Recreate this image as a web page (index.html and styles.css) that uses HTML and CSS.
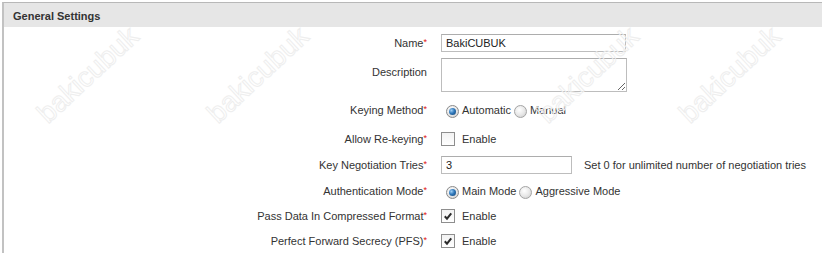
FILE: index.html
```html
<!DOCTYPE html>
<html>
<head>
<meta charset="utf-8">
<link rel="stylesheet" href="styles.css">
</head>
<body>
<div class="panel">
  <div class="head">General Settings</div>
  <div class="form">
    <div class="row r1">
      <div class="lbl">Name<span class="req">*</span></div>
      <div class="ctl"><input class="txt wide" type="text" value="BakiCUBUK"></div>
    </div>
    <div class="row r2">
      <div class="lbl lbl-up">Description</div>
      <div class="ctl"><textarea class="area"></textarea></div>
    </div>
    <div class="row r3">
      <div class="lbl">Keying Method<span class="req">*</span></div>
      <div class="ctl"><span class="rad on"></span><span class="opt">Automatic</span><span class="rad rad2"></span><span class="opt">Manual</span></div>
    </div>
    <div class="row r4">
      <div class="lbl">Allow Re-keying<span class="req">*</span></div>
      <div class="ctl"><span class="cb"></span><span class="opt cbt">Enable</span></div>
    </div>
    <div class="row r5">
      <div class="lbl">Key Negotiation Tries<span class="req">*</span></div>
      <div class="ctl"><input class="txt narrow" type="text" value="3"><span class="hint">Set 0 for unlimited number of negotiation tries</span></div>
    </div>
    <div class="row r6">
      <div class="lbl">Authentication Mode<span class="req">*</span></div>
      <div class="ctl"><span class="rad on"></span><span class="opt">Main Mode</span><span class="rad rad2"></span><span class="opt">Aggressive Mode</span></div>
    </div>
    <div class="row r7">
      <div class="lbl">Pass Data In Compressed Format<span class="req">*</span></div>
      <div class="ctl"><span class="cb"><svg viewBox="0 0 13 13" width="13" height="13"><path d="M3 6.2 L5.4 8.8 L10 3.2" fill="none" stroke="#2b2b2b" stroke-width="2.2"/></svg></span><span class="opt cbt">Enable</span></div>
    </div>
    <div class="row r8">
      <div class="lbl">Perfect Forward Secrecy (PFS)<span class="req">*</span></div>
      <div class="ctl"><span class="cb"><svg viewBox="0 0 13 13" width="13" height="13"><path d="M3 6.2 L5.4 8.8 L10 3.2" fill="none" stroke="#2b2b2b" stroke-width="2.2"/></svg></span><span class="opt cbt">Enable</span></div>
    </div>
  </div>
</div>
<div class="wm-layer">
  <span class="wm wa1">bakicubuk</span>
  <span class="wm wa2">bakicubuk</span>
  <span class="wm wa3">bakicubuk</span>
  <span class="wm wa4">bakicubuk</span>
</div>
</body>
</html>
```
FILE: styles.css
```css
html, body {
  margin: 0;
  padding: 0;
  background: #fff;
}
body {
  position: relative;
  width: 822px;
  height: 260px;
  overflow: hidden;
  font-family: "Liberation Sans", Arial, sans-serif;
  font-size: 11px;
  color: #333;
}
.panel {
  margin: 2px 0 0 2px;
  border-top: 1px solid #b8b8b8;
  border-left: 2px solid #c2c2c2;
}
.head {
  height: 21px;
  padding: 3px 0 0 9px;
  line-height: 21px;
  background: #e6e6e6;
  font-weight: bold;
  font-size: 11px;
  color: #333;
}
.form {
  display: flex;
  flex-direction: column;
}
.row {
  display: flex;
  align-items: center;
}
.r1 { height: 31px; }
.r2 { height: 34px; }
.r3 { height: 36px; }
.r4 { height: 22px; }
.r5 { height: 29px; }
.r6 { height: 24px; }
.r7 { height: 26px; }
.r8 { height: 24px; }
.lbl {
  flex: none;
  width: 423px;
  text-align: right;
  white-space: nowrap;
}
.lbl-up {
  margin-bottom: 6px;
}
.req {
  color: #e01010;
  font-size: 9px;
  vertical-align: 2px;
}
.ctl {
  margin-left: 14px;
  display: flex;
  align-items: center;
  white-space: nowrap;
}
.txt {
  box-sizing: border-box;
  height: 18px;
  margin: 0;
  padding: 0 4px;
  border: 1px solid #bdbdbd;
  border-top-color: #adadad;
  font-family: "Liberation Sans", Arial, sans-serif;
  font-size: 11px;
  color: #222;
  background: #fff;
  outline: none;
}
.wide { width: 185px; }
.narrow { width: 131px; }
.area {
  box-sizing: border-box;
  width: 186px;
  height: 34px;
  margin: 0;
  padding: 2px 4px;
  border: 1px solid #bdbdbd;
  border-top-color: #adadad;
  resize: both;
  display: block;
  font-family: "Liberation Sans", Arial, sans-serif;
  font-size: 11px;
}
.hint {
  margin-left: 12px;
  color: #333;
}
.rad {
  box-sizing: border-box;
  flex: none;
  width: 13px;
  height: 13px;
  margin: 2px 3px 0 5px;
  border-radius: 50%;
  border: 1px solid #a4a4a4;
  background: radial-gradient(circle at 40% 35%, #ffffff 0%, #e9e9e9 50%, #c9c9c9 100%);
  display: flex;
  align-items: center;
  justify-content: center;
}
.rad2 {
  margin-left: 3px;
}
.rad.on {
  border-color: #8a8a8a;
}
.rad.on::after {
  content: "";
  width: 7px;
  height: 7px;
  border-radius: 50%;
  background: radial-gradient(circle at 35% 35%, #9fcff5 0%, #2f78bb 45%, #123f6e 100%);
}
.cb {
  box-sizing: border-box;
  flex: none;
  width: 14px;
  height: 14px;
  border: 1px solid #8e8e8e;
  background: linear-gradient(#f2f2f2, #ffffff);
  display: flex;
  align-items: center;
  justify-content: center;
}
.cb svg {
  display: block;
}
.cbt {
  margin-left: 7px;
}
.wm-layer {
  position: absolute;
  left: 0;
  top: 0;
  width: 822px;
  height: 260px;
  overflow: hidden;
  pointer-events: none;
}
.wm {
  position: absolute;
  width: 160px;
  height: 34px;
  line-height: 34px;
  text-align: center;
  font-family: "Liberation Sans", Arial, sans-serif;
  font-size: 28px;
  color: transparent;
  -webkit-text-stroke: 1px #eeeeee;
  transform: rotate(-43deg);
}
.wa1 { left: 8px; top: 58px; }
.wa2 { left: 178px; top: 58px; }
.wa3 { left: 508px; top: 58px; }
.wa4 { left: 650px; top: 58px; }
```
